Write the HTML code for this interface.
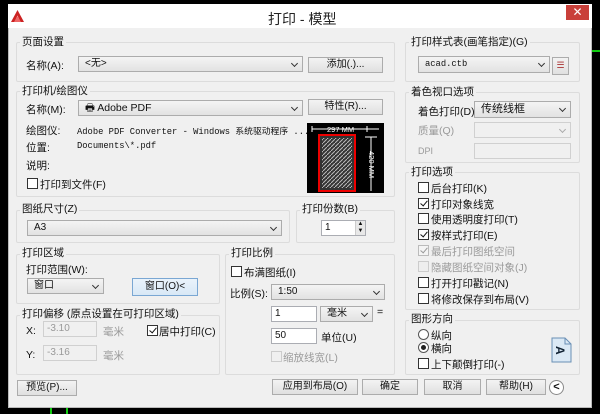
<!DOCTYPE html>
<html><head><meta charset="utf-8"><style>
*{box-sizing:border-box;margin:0;padding:0}
body{width:600px;height:414px;background:#000;position:relative;overflow:hidden;font-family:"Liberation Sans","Noto Sans CJK SC",sans-serif;font-size:10.5px;color:#111}
.a{position:absolute;white-space:nowrap}
.dlg{position:absolute;left:8px;top:4px;width:584px;height:404px;background:#f0f0f0;border:1px solid #bbb}
.tb{position:absolute;left:8px;top:4px;width:584px;height:24px;background:#fff}
.g{position:absolute;border:1px solid #dcdcdc;border-radius:2px}
.gl{position:absolute;background:#f0f0f0;padding:0 2px;font-size:10.5px;line-height:12px}
.sel{position:absolute;height:16px;background:linear-gradient(#f4f4f4,#e2e2e2);border:1px solid #acacac;line-height:14px;padding-left:6px;font-size:10px}
.sel:after{content:"";position:absolute;right:5px;top:4px;width:4px;height:4px;border-right:1.3px solid #333;border-bottom:1.3px solid #333;transform:rotate(45deg)}
.sel.d{background:#f0f0f0;border-color:#d0d0d0}
.sel.d:after{border-color:#aaa}
.btn{position:absolute;height:16px;background:linear-gradient(#f3f3f3,#e0e0e0);border:1px solid #acacac;text-align:center;line-height:14px;font-size:10px}
.inp{position:absolute;height:16px;background:#fff;border:1px solid #abadb3;line-height:14px;padding-left:3px;font-size:10px}
.inp.d{background:#f0f0f0;color:#999;border-color:#d0d0d0}
.cb{position:absolute;width:11px;height:11px;border:1px solid #333;background:#fff}
.cb.k:after{content:"";position:absolute;left:3px;top:0px;width:3px;height:6px;border-right:1.6px solid #111;border-bottom:1.6px solid #111;transform:rotate(40deg)}
.cb.dk{border-color:#bbb;background:#f4f4f4}
.cb.dk:after{content:"";position:absolute;left:3px;top:0px;width:3px;height:6px;border-right:1.6px solid #999;border-bottom:1.6px solid #999;transform:rotate(40deg)}
.gray{color:#9a9a9a}
.mono{font-family:"Liberation Mono","Noto Sans CJK SC",monospace;font-size:8.8px}
</style></head><body>
<div class="a" style="left:590px;top:50px;width:10px;height:2px;background:#1c1"></div>
<div class="a" style="left:50px;top:408px;width:2px;height:6px;background:#1c1"></div>
<div class="a" style="left:66px;top:408px;width:2px;height:6px;background:#1c1"></div>
<div class="dlg"></div>
<div class="tb"></div>
<svg class="a" style="left:11px;top:10px" width="13" height="12"><path d="M6.5 0L13 12H9.5L6.5 5.5L3.5 12H0Z" fill="#c22"/><path d="M3 12L6.5 6L10 12Z" fill="#e66"/></svg>
<div class="a" style="left:268px;top:9px;font-size:14px;color:#222">打印 - 模型</div>
<div class="a" style="left:566px;top:5px;width:23px;height:15px;background:#c9403a;color:#fff;text-align:center;line-height:15px;font-size:12px">✕</div>

<div class="g" style="left:16px;top:42px;width:379px;height:40px"></div>
<div class="gl" style="left:20px;top:36px">页面设置</div>
<div class="a" style="left:26px;top:58px">名称(A):</div>
<div class="sel" style="left:78px;top:56px;width:225px">&lt;无&gt;</div>
<div class="btn" style="left:308px;top:57px;width:75px">添加(.)...</div>

<div class="g" style="left:16px;top:91px;width:379px;height:106px"></div>
<div class="gl" style="left:20px;top:85px">打印机/绘图仪</div>
<div class="a" style="left:26px;top:102px">名称(M):</div>
<div class="sel" style="left:78px;top:100px;width:225px;font-size:10.5px">🖶 Adobe PDF</div>
<div class="btn" style="left:308px;top:99px;width:75px">特性(R)...</div>
<div class="a" style="left:26px;top:123px">绘图仪:</div>
<div class="a mono" style="left:77px;top:124px">Adobe PDF Converter - Windows 系统驱动程序 ...</div>
<div class="a" style="left:26px;top:140px">位置:</div>
<div class="a mono" style="left:77px;top:141px">Documents\*.pdf</div>
<div class="a" style="left:26px;top:158px">说明:</div>
<div class="cb" style="left:27px;top:178px"></div>
<div class="a" style="left:40px;top:177px">打印到文件(F)</div>
<div class="a" style="left:307px;top:123px;width:77px;height:70px;background:#000"></div>
<svg class="a" style="left:307px;top:123px" width="77" height="70">
<defs><pattern id="h" width="4" height="4" patternUnits="userSpaceOnUse"><path d="M0 4L4 0" stroke="#bbb" stroke-width="1"/></pattern></defs>
<rect x="12" y="12" width="36" height="56" fill="#333" stroke="#e00" stroke-width="2"/>
<rect x="15" y="15" width="30" height="50" fill="url(#h)"/>
<path d="M5 6H72M5 3V9M60 3V9M64 14V68M58 14H70" stroke="#fff" stroke-width="1"/>
<text x="20" y="9" fill="#fff" font-size="7.5" font-family="Liberation Sans">297 MM</text>
<text x="62" y="28" fill="#fff" font-size="7.5" font-family="Liberation Sans" transform="rotate(90 62 28)">420 MM</text>
</svg>

<div class="g" style="left:16px;top:210px;width:274px;height:33px"></div>
<div class="gl" style="left:20px;top:203px">图纸尺寸(Z)</div>
<div class="sel" style="left:27px;top:220px;width:255px">A3</div>
<div class="g" style="left:296px;top:210px;width:99px;height:33px"></div>
<div class="gl" style="left:300px;top:203px">打印份数(B)</div>
<div class="inp" style="left:321px;top:220px;width:45px">1</div>
<div class="a" style="left:355px;top:221px;width:10px;height:14px;background:#e8e8e8;border-left:1px solid #ccc;font-size:6px;line-height:7px;text-align:center">▲<br>▼</div>

<div class="g" style="left:16px;top:254px;width:204px;height:50px"></div>
<div class="gl" style="left:20px;top:247px">打印区域</div>
<div class="a" style="left:26px;top:262px">打印范围(W):</div>
<div class="sel" style="left:27px;top:278px;width:77px">窗口</div>
<div class="btn" style="left:132px;top:278px;width:66px;height:18px;line-height:16px;border-color:#7aa7d3;background:linear-gradient(#eaf3fb,#d8e8f6)">窗口(O)&lt;</div>

<div class="g" style="left:16px;top:315px;width:204px;height:60px"></div>
<div class="gl" style="left:20px;top:308px">打印偏移 (原点设置在可打印区域)</div>
<div class="a" style="left:26px;top:325px">X:</div>
<div class="inp d" style="left:43px;top:321px;width:54px">-3.10</div>
<div class="a gray" style="left:103px;top:324px">毫米</div>
<div class="cb k" style="left:147px;top:325px"></div>
<div class="a" style="left:159px;top:324px">居中打印(C)</div>
<div class="a" style="left:26px;top:349px">Y:</div>
<div class="inp d" style="left:43px;top:345px;width:54px">-3.16</div>
<div class="a gray" style="left:103px;top:348px">毫米</div>

<div class="g" style="left:225px;top:254px;width:170px;height:121px"></div>
<div class="gl" style="left:229px;top:247px">打印比例</div>
<div class="cb" style="left:231px;top:266px"></div>
<div class="a" style="left:244px;top:265px">布满图纸(I)</div>
<div class="a" style="left:230px;top:286px">比例(S):</div>
<div class="sel" style="left:271px;top:284px;width:114px">1:50</div>
<div class="inp" style="left:271px;top:306px;width:46px">1</div>
<div class="sel" style="left:320px;top:306px;width:53px">毫米</div>
<div class="a" style="left:377px;top:306px">=</div>
<div class="inp" style="left:271px;top:328px;width:46px">50</div>
<div class="a" style="left:321px;top:330px">单位(U)</div>
<div class="cb" style="left:271px;top:351px;border-color:#ccc;background:#f0f0f0"></div>
<div class="a gray" style="left:283px;top:350px">缩放线宽(L)</div>

<div class="btn" style="left:17px;top:380px;width:60px">预览(P)...</div>
<div class="btn" style="left:272px;top:379px;width:86px">应用到布局(O)</div>
<div class="btn" style="left:362px;top:379px;width:56px">确定</div>
<div class="btn" style="left:424px;top:379px;width:57px">取消</div>
<div class="btn" style="left:486px;top:379px;width:60px">帮助(H)</div>
<div class="a" style="left:549px;top:380px;width:15px;height:15px;border-radius:50%;border:1px solid #888;background:#fff;text-align:center;line-height:12px;font-size:11px;font-weight:bold">&lt;</div>

<div class="g" style="left:405px;top:42px;width:175px;height:40px"></div>
<div class="gl" style="left:409px;top:36px">打印样式表(画笔指定)(G)</div>
<div class="sel mono" style="left:418px;top:56px;width:132px;height:17px">acad.ctb</div>
<div class="btn" style="left:552px;top:57px;width:17px;height:18px;font-size:9px;color:#a33">☰</div>

<div class="g" style="left:405px;top:92px;width:175px;height:71px"></div>
<div class="gl" style="left:409px;top:86px">着色视口选项</div>
<div class="a" style="left:418px;top:104px">着色打印(D)</div>
<div class="sel" style="left:474px;top:101px;width:97px;height:17px;font-size:11px">传统线框</div>
<div class="a gray" style="left:418px;top:123px">质量(Q)</div>
<div class="sel d" style="left:474px;top:122px;width:97px"></div>
<div class="a gray" style="left:418px;top:146px;font-size:9px">DPI</div>
<div class="inp d" style="left:474px;top:143px;width:97px"></div>

<div class="g" style="left:405px;top:172px;width:175px;height:138px"></div>
<div class="gl" style="left:409px;top:166px">打印选项</div>
<div class="cb" style="left:418px;top:182px"></div><div class="a" style="left:431px;top:181px">后台打印(K)</div>
<div class="cb k" style="left:418px;top:198px"></div><div class="a" style="left:431px;top:197px">打印对象线宽</div>
<div class="cb" style="left:418px;top:213px"></div><div class="a" style="left:431px;top:212px">使用透明度打印(T)</div>
<div class="cb k" style="left:418px;top:229px"></div><div class="a" style="left:431px;top:228px">按样式打印(E)</div>
<div class="cb dk" style="left:418px;top:245px"></div><div class="a gray" style="left:431px;top:244px">最后打印图纸空间</div>
<div class="cb" style="left:418px;top:261px;border-color:#ccc;background:#eee"></div><div class="a gray" style="left:431px;top:260px">隐藏图纸空间对象(J)</div>
<div class="cb" style="left:418px;top:277px"></div><div class="a" style="left:431px;top:276px">打开打印戳记(N)</div>
<div class="cb" style="left:418px;top:293px"></div><div class="a" style="left:431px;top:292px">将修改保存到布局(V)</div>

<div class="g" style="left:405px;top:320px;width:175px;height:55px"></div>
<div class="gl" style="left:409px;top:313px">图形方向</div>
<div class="a" style="left:418px;top:329px;width:11px;height:11px;border-radius:50%;border:1px solid #555;background:#fff"></div>
<div class="a" style="left:431px;top:328px">纵向</div>
<div class="a" style="left:418px;top:342px;width:11px;height:11px;border-radius:50%;border:1px solid #555;background:#fff"><div style="margin:2px;width:5px;height:5px;border-radius:50%;background:#222"></div></div>
<div class="a" style="left:431px;top:341px">横向</div>
<div class="cb" style="left:418px;top:358px"></div><div class="a" style="left:431px;top:357px">上下颠倒打印(-)</div>
<svg class="a" style="left:551px;top:337px" width="21" height="26"><path d="M1 1H14L20 7V25H1Z" fill="#dbe9f5" stroke="#6a8fb5"/><path d="M14 1V7H20" fill="none" stroke="#6a8fb5"/><text x="5" y="19" font-size="12" font-weight="bold" font-family="Liberation Sans" fill="#123" transform="rotate(90 10 14)">A</text></svg>
</body></html>
